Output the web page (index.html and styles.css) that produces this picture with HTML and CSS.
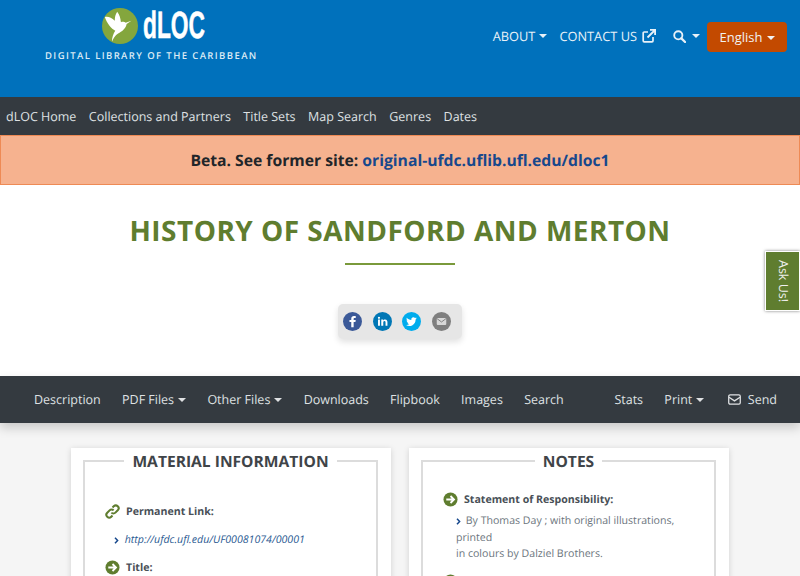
FILE: index.html
```html
<!DOCTYPE html>
<html lang="en">
<head>
  <meta charset="UTF-8" />
  <meta name="viewport" content="width=device-width, initial-scale=1.0"/>
  <title>History of Sandford and Merton</title>
  <link rel="stylesheet" href="styles.css">
</head>
<body>

  <header class="top-bar">
    <a class="logo" href="#">
      <span class="logo-row">
        <svg class="logo-mark" viewBox="0 0 38 38" width="36" height="36">
          <circle cx="19" cy="19" r="19" fill="#84a63d"/>
          <path d="M3 9.500C6 8.500 10 10 13.500 13.500C13.500 10 14 7 16 4C18.500 7 19.500 11 20 15C22 14 24 15 25 15.500L31 13.500L26 17C25 22 21 25 17 27C14 29 12 32 10.500 35.500C10.500 31 12 27 14 24C10 22 5 16 3 9.500Z" fill="#fff"/>
        </svg>
        <span class="logo-name"><span>dLOC</span></span>
      </span>
      <span class="logo-tag">DIGITAL LIBRARY OF THE CARIBBEAN</span>
    </a>

    <nav class="top-nav">
      <a class="caret" href="#">ABOUT</a>
      <a class="contact" href="#">CONTACT US
        <svg class="ext-icon" viewBox="0 0 14 14" width="14" height="14">
          <path d="M6 3H2.200a1 1 0 0 0-1 1v7.800a1 1 0 0 0 1 1H10a1 1 0 0 0 1-1V8" fill="none" stroke="currentColor" stroke-width="1.700"/>
          <path d="M5.500 8.500 12.500 1.500M8 .9h5.100V6" fill="none" stroke="currentColor" stroke-width="1.800"/>
        </svg>
      </a>
      <a class="caret search-link" href="#">
        <svg viewBox="0 0 14 14" width="13" height="13">
          <circle cx="5.700" cy="5.700" r="4.400" fill="none" stroke="currentColor" stroke-width="2"/>
          <path d="M9 9l4 4" stroke="currentColor" stroke-width="2.400" stroke-linecap="round"/>
        </svg>
      </a>
      <button class="lang-btn caret">English</button>
    </nav>
  </header>

  <nav class="main-nav">
    <a href="#">dLOC Home</a>
    <a href="#">Collections and Partners</a>
    <a href="#">Title Sets</a>
    <a href="#">Map Search</a>
    <a href="#">Genres</a>
    <a href="#">Dates</a>
  </nav>

  <div class="beta-note">Beta. See former site: <a href="#">original-ufdc.uflib.ufl.edu/dloc1</a></div>

  <section class="title-block">
    <h1>HISTORY OF SANDFORD AND MERTON</h1>
    <div class="title-rule"></div>
    <div class="share-box">
      <a class="share fb" href="#">
        <svg viewBox="0 0 20 20" width="19" height="19"><path d="M11.200 16v-5.400h1.900l.3-2.100h-2.200V7.200c0-.6.2-1 1-1h1.200V4.300C13 4.300 12.300 4.200 11.500 4.200 9.800 4.200 8.700 5.200 8.700 7v1.500H6.800v2.100h1.900V16z" fill="#fff"/></svg>
      </a>
      <a class="share li" href="#">
        <svg viewBox="0 0 20 20" width="19" height="19"><path d="M5.300 8h2v6.500h-2zM6.300 5a1.150 1.150 0 1 1 0 2.300 1.150 1.150 0 0 1 0-2.300zM8.700 8h1.900v.9c.3-.5 1-1.100 2.100-1.100 2.100 0 2.500 1.400 2.500 3.200v3.500h-2v-3.100c0-.8 0-1.800-1.100-1.800s-1.300.9-1.300 1.700v3.200h-2.100z" fill="#fff"/></svg>
      </a>
      <a class="share tw" href="#">
        <svg viewBox="0 0 20 20" width="19" height="19"><path d="M15.500 6.500c-.4.200-.9.300-1.300.4.500-.3.800-.7 1-1.200-.4.300-.9.500-1.500.6a2.300 2.300 0 0 0-3.900 2.100C7.900 8.300 6.200 7.400 5.100 6c-.6 1-.3 2.400.7 3.100-.4 0-.7-.1-1-.3 0 1.100.8 2.100 1.800 2.300-.3.100-.7.100-1 0 .3.900 1.100 1.600 2.100 1.600a4.600 4.600 0 0 1-3.400 1A6.500 6.500 0 0 0 14.300 8c.5-.4.900-.9 1.200-1.500z" fill="#fff"/></svg>
      </a>
      <a class="share em" href="#">
        <svg viewBox="0 0 20 20" width="19" height="19"><rect x="5" y="6.300" width="10" height="7.400" rx="1" fill="#d8d8d8"/><path d="M5.300 7l4.700 3.500L14.700 7" fill="none" stroke="#7f7f7f" stroke-width="1"/></svg>
      </a>
    </div>
  </section>

  <a class="ask-tab" href="#"><span>Ask Us!</span></a>

  <nav class="item-nav">
    <div class="item-links">
      <a href="#">Description</a>
      <a class="caret" href="#">PDF Files</a>
      <a class="caret" href="#">Other Files</a>
      <a href="#">Downloads</a>
      <a href="#">Flipbook</a>
      <a href="#">Images</a>
      <a href="#">Search</a>
    </div>
    <div class="item-links">
      <a href="#">Stats</a>
      <a class="caret" href="#">Print</a>
      <a class="send" href="#">
        <svg class="send-icon" viewBox="0 0 14 12" width="13" height="11"><rect x=".7" y="1" width="12.600" height="10" rx="1.500" fill="none" stroke="currentColor" stroke-width="1.400"/><path d="M1 3.500l6 4 6-4" fill="none" stroke="currentColor" stroke-width="1.400"/></svg>
        Send
      </a>
    </div>
  </nav>

  <main class="content">
    <div class="card">
      <fieldset>
        <legend>MATERIAL INFORMATION</legend>
        <div class="field first-field">
          <h3>
            <svg class="field-icon" viewBox="0 0 16 16" width="15" height="15"><path d="M6.800 9.200a3 3 0 0 0 4.300 0l2.500-2.500a3 3 0 0 0-4.300-4.300L8 3.700M9.200 6.800a3 3 0 0 0-4.300 0L2.400 9.300a3 3 0 0 0 4.300 4.300L8 12.300" fill="none" stroke="#5f7d2f" stroke-width="2.200"/></svg>
            Permanent Link:
          </h3>
          <p class="value link-value">
            <svg class="chev" viewBox="0 0 5 7" width="5" height="7"><path d="M1 .8 3.600 3.500 1 6.200" fill="none" stroke="#17488c" stroke-width="1.500"/></svg>
            <a href="#">http://ufdc.ufl.edu/UF00081074/00001</a>
          </p>
        </div>
        <div class="field title-field">
          <h3>
            <svg class="field-icon" viewBox="0 0 16 16" width="15" height="15"><circle cx="8" cy="8" r="7.500" fill="#5f7d2f"/><path d="M3.500 8h8M8 4.300 11.700 8 8 11.700" fill="none" stroke="#fff" stroke-width="2"/></svg>
            Title:
          </h3>
        </div>
      </fieldset>
    </div>

    <div class="card">
      <fieldset>
        <legend>NOTES</legend>
        <div class="field notes-field">
          <h3>
            <svg class="field-icon" viewBox="0 0 16 16" width="15" height="15"><circle cx="8" cy="8" r="7.500" fill="#5f7d2f"/><path d="M3.500 8h8M8 4.300 11.700 8 8 11.700" fill="none" stroke="#fff" stroke-width="2"/></svg>
            Statement of Responsibility:
          </h3>
          <p class="value plain">
            <svg class="chev" viewBox="0 0 5 7" width="5" height="7"><path d="M1 .8 3.600 3.500 1 6.200" fill="none" stroke="#17488c" stroke-width="1.500"/></svg>
            By Thomas Day ; with original illustrations, printed<br>in colours by Dalziel Brothers.
          </p>
        </div>
        <div class="field next-field">
          <svg class="field-icon" viewBox="0 0 16 16" width="15" height="15"><circle cx="8" cy="8" r="7.500" fill="#5f7d2f"/><path d="M3.500 8h8M8 4.300 11.700 8 8 11.700" fill="none" stroke="#fff" stroke-width="2"/></svg>
        </div>
      </fieldset>
    </div>
  </main>

</body>
</html>
```

FILE: styles.css
```css
* {
  box-sizing: border-box;
}

html, body {
  height: 100%;
  overflow: hidden;
}

body {
  font-family: "Open Sans", Arial, sans-serif;
  background: #f5f5f5;
  color: #343a40;
  margin: 0;
  padding: 0;
  text-rendering: geometricPrecision;
}

a {
  text-decoration: none;
}

.caret {
  white-space: nowrap;
}

.caret::after {
  content: "";
  display: inline-block;
  margin-left: 4px;
  vertical-align: 2px;
  border-top: 4.500px solid currentColor;
  border-left: 4.500px solid transparent;
  border-right: 4.500px solid transparent;
}

/* Blue top bar */
.top-bar {
  height: 97px;
  background: #0071bc;
  display: flex;
  justify-content: space-between;
  align-items: flex-start;
  padding: 0 13px 0 45px;
}

.logo {
  display: flex;
  flex-direction: column;
  align-items: center;
  padding-top: 8px;
  color: #fff;
}

.logo-row {
  display: flex;
  align-items: center;
  gap: 5px;
  height: 36px;
  margin-left: 4px;
}

.logo-name {
  display: block;
  width: 61px;
  font-family: "Liberation Sans", sans-serif;
  font-weight: bold;
  font-size: 38px;
  line-height: 36px;
  white-space: nowrap;
}

.logo-name span {
  display: inline-block;
  transform: scaleX(0.6);
  transform-origin: left center;
  -webkit-text-stroke: 0.5px #fff;
}

.logo-tag {
  font-size: 9.500px;
  font-weight: 600;
  letter-spacing: 1.400px;
  line-height: 12px;
  margin-top: 6px;
  color: #dcebf5;
  white-space: nowrap;
}

.top-nav {
  display: flex;
  align-items: center;
  padding-top: 22px;
  font-size: 12.800px;
}

.top-nav a {
  color: #e8f1f8;
  margin-right: 12px;
  margin-bottom: 2px;
  display: flex;
  align-items: center;
}

.top-nav .contact {
  margin-right: 17px;
}

.ext-icon {
  margin-left: 5px;
}

.top-nav .search-link {
  margin-right: 7px;
}

.search-link::after {
  margin-left: 6px;
}

.lang-btn {
  background: #c34a00;
  color: #f2f2f2;
  border: none;
  border-radius: 4px;
  font-family: "Open Sans", sans-serif;
  font-size: 13px;
  height: 30px;
  width: 80px;
  padding: 0;
}

/* Dark nav bars */
.main-nav {
  height: 38px;
  background: #343a40;
  display: flex;
  align-items: center;
  padding-left: 6px;
  gap: 12.500px;
  font-size: 12.500px;
}

.main-nav a,
.item-nav a {
  color: #dfe1e3;
}

.beta-note {
  height: 50px;
  background: #f6b28f;
  border: 1px solid #ee8a55;
  text-align: center;
  line-height: 49px;
  font-size: 15.700px;
  font-weight: 700;
  color: #212529;
}

.beta-note a {
  color: #17488c;
}

/* Title area */
.title-block {
  background: #fff;
  height: 191px;
  display: flex;
  flex-direction: column;
  align-items: center;
  padding-top: 26px;
}

h1 {
  margin: 0;
  color: #5f7d2f;
  font-size: 28px;
  line-height: 40px;
  font-weight: 700;
  letter-spacing: 0.470px;
}

.title-rule {
  width: 110px;
  height: 2px;
  background: #7a9a3b;
  margin-top: 12px;
}

.share-box {
  margin-top: 39px;
  width: 124px;
  height: 35px;
  background: #e6e6e6;
  border-radius: 5px;
  box-shadow: 0 3px 6px rgba(0,0,0,0.12);
  display: flex;
  align-items: center;
  padding-left: 5px;
  gap: 10.500px;
}

.share {
  width: 19px;
  height: 19px;
  border-radius: 50%;
  display: flex;
  align-items: center;
  justify-content: center;
}

.fb { background: #3b5998; }
.li { background: #0077b5; }
.tw { background: #00aced; }
.em { background: #7f7f7f; }

.ask-tab {
  position: absolute;
  right: 0;
  top: 251px;
  width: 35px;
  height: 60px;
  background: #5f7d2f;
  border: 1px solid #fff;
  box-shadow: 0 0 3px rgba(0,0,0,0.5);
  color: #f0f0f0;
  font-size: 12.500px;
  padding-left: 1px;
  display: flex;
  align-items: center;
  justify-content: center;
}

.ask-tab span {
  writing-mode: vertical-rl;
}

/* Item nav */
.item-nav {
  height: 47px;
  background: #343a40;
  box-shadow: 0 5px 10px rgba(0,0,0,0.18);
  display: flex;
  justify-content: space-between;
  align-items: center;
  padding: 0 23px 0 34px;
  font-size: 12.500px;
  position: relative;
  white-space: nowrap;
}

.item-links {
  display: flex;
  gap: 21.300px;
}

.item-links .send {
  margin-left: 2px;
}

.send-icon {
  margin-right: 4px;
  vertical-align: -1px;
}

/* Cards */
.content {
  display: flex;
  gap: 18px;
  padding: 25px 0 0 71px;
}

.card {
  width: 320px;
  height: 300px;
  background: #fff;
  box-shadow: 0 1px 6px rgba(0,0,0,0.15);
  padding: 0 13px 0 12px;
}

fieldset {
  margin: 0;
  padding: 0 20px;
  height: 100%;
  border: 2px solid #dcdcdc;
  min-width: 0;
}

legend {
  margin: 0 auto;
  padding: 0 8px;
  font-size: 15.600px;
  font-weight: 700;
  line-height: 26px;
  color: #3f4448;
}

h3 {
  margin: 0;
  font-size: 10.600px;
  font-weight: 700;
  color: #495057;
  display: flex;
  align-items: center;
  gap: 6px;
}

.field {
  padding-top: 17px;
}

.first-field {
  padding-top: 30px;
}

.title-field {
  padding-top: 11px;
}

.notes-field {
  padding-top: 18px;
}

.value {
  margin: 13px 0 0;
  font-size: 10.600px;
  line-height: 16px;
  color: #6c757d;
}

.link-value {
  margin-left: 9px;
}

.value a {
  color: #2a5a92;
  font-style: italic;
}

.plain {
  margin-top: 6px;
  margin-left: 13px;
  padding-right: 4px;
}

.chev {
  margin-right: 2px;
  vertical-align: -6.300px;
  margin-bottom: 5.300px;
}

.link-value .chev {
  margin-right: 3px;
}

.next-field {
  padding-top: 10px;
}
```
